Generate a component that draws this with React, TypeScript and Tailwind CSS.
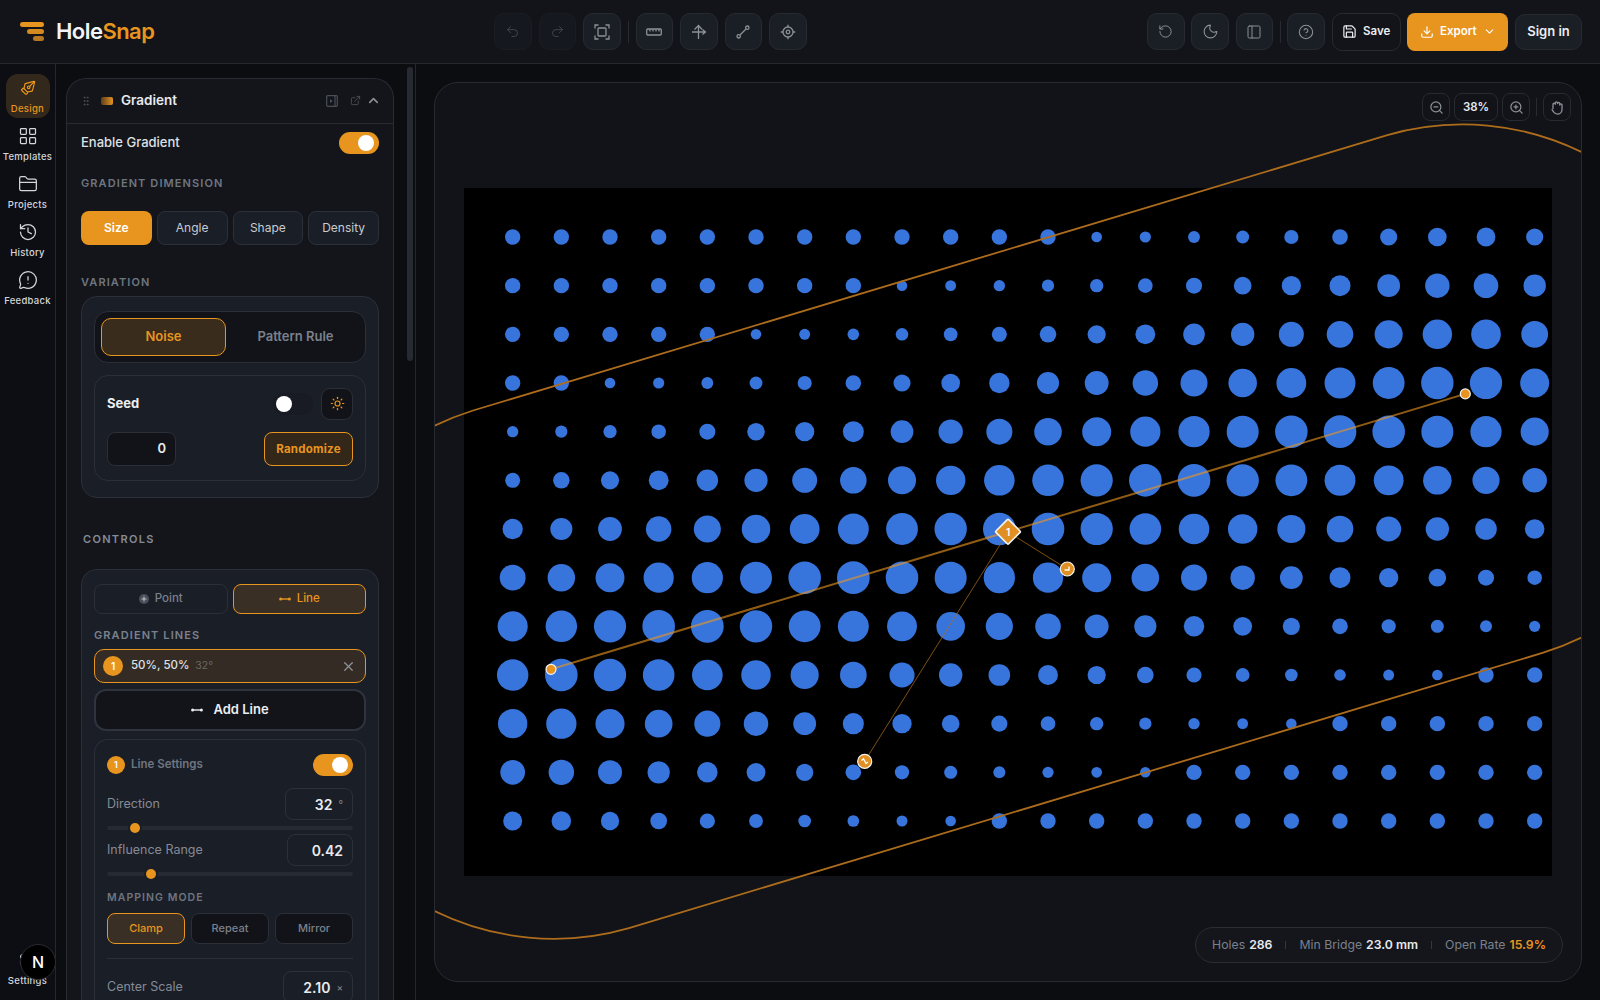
import {
  ChevronDown,
  ChevronUp,
  CircleHelp,
  Download,
  ExternalLink,
  FolderClosed,
  GripVertical,
  History,
  LayoutGrid,
  MessageCircleWarning,
  Moon,
  PanelLeft,
  PenTool,
  Redo2,
  RotateCcw,
  Save,
  Settings,
  Sun,
  Undo2,
  X,
  ZoomIn,
  ZoomOut,
} from 'lucide-react'
import type { ReactNode } from 'react'

const railItems = [
  { label: 'Templates', icon: LayoutGrid },
  { label: 'Projects', icon: FolderClosed },
  { label: 'History', icon: History },
  { label: 'Feedback', icon: MessageCircleWarning },
]

const toolBtn =
  'flex items-center justify-center w-[37.5px] h-[37.5px] rounded-[10px] bg-[#1a1e25] border border-[#262a31] text-[#8b9099]'
const zoomBtn =
  'flex items-center justify-center w-[28px] h-[28px] rounded-[8px] border border-[#262a31] text-[#8b9099]'

// band geometry, in page pixels
const A = { x: 551, y: 669.3 }
const B = { x: 1465.3, y: 393.9 }
const BAND = 270.3

function holeDiameter(x: number, y: number) {
  const dx = B.x - A.x
  const dy = B.y - A.y
  const t = Math.max(0, Math.min(1, ((x - A.x) * dx + (y - A.y) * dy) / (dx * dx + dy * dy)))
  const dist = Math.hypot(x - (A.x + dx * t), y - (A.y + dy * t))
  if (dist > BAND) return 15.4
  const s = 1 - dist / BAND
  return 10.5 + 22.2 * s * s * (3 - 2 * s)
}

function Holes() {
  const dots = []
  for (let r = 0; r < 13; r++) {
    for (let c = 0; c < 22; c++) {
      const x = 512.67 + c * 48.667
      const y = 237 + r * 48.667
      dots.push(<circle key={`${r}-${c}`} cx={x - 464} cy={y - 188} r={holeDiameter(x, y) / 2} fill="#3775dd" />)
    }
  }
  return (
    <svg viewBox="0 0 1088 688" width="1088" height="688" className="block">
      {dots}
    </svg>
  )
}

function Overlay() {
  return (
    <svg viewBox="435 83 1146 898" className="absolute inset-0 w-full h-full pointer-events-none">
      <path
        d="M473.05 410.5 L1387.35 135.1 A270.3 270.3 0 0 1 1543.25 652.7 L628.95 928.1 A270.3 270.3 0 0 1 473.05 410.5 Z"
        fill="none"
        stroke="#ac6c1c"
        strokeWidth="1.8"
      />
      <line x1={A.x} y1={A.y} x2={B.x} y2={B.y} stroke="#e8951f" strokeOpacity="0.62" strokeWidth="2" />
      <line x1="1008" y1="532" x2="864.7" y2="761.3" stroke="#a8691c" strokeOpacity="0.75" strokeWidth="1" />
      <line x1="1008" y1="532" x2="1067.3" y2="569" stroke="#a8691c" strokeOpacity="0.75" strokeWidth="1" />
      <circle cx={A.x} cy={A.y} r="5" fill="#e8951f" stroke="#f4f4f5" strokeWidth="1.2" />
      <circle cx={B.x} cy={B.y} r="5" fill="#e8951f" stroke="#f4f4f5" strokeWidth="1.2" />
      <rect x="999" y="522.7" width="18" height="18" fill="#e08f22" stroke="#f4f4f5" strokeWidth="1.6" transform="rotate(45 1008 531.7)" rx="1" />
      <text x="1008" y="535.7" textAnchor="middle" fontSize="10" fontWeight="600" fill="#fff">
        1
      </text>
      <circle cx="1067.3" cy="569" r="7" fill="#e08f22" stroke="#f4f4f5" strokeWidth="1.2" />
      <path d="M1064.5 570 H1069 V566.5" fill="none" stroke="#fff" strokeWidth="1.3" />
      <circle cx="864.7" cy="761.3" r="7" fill="#e08f22" stroke="#f4f4f5" strokeWidth="1.2" />
      <path d="M861.5 760.5 L863.5 758.8 L866 763.5 L868 762" fill="none" stroke="#fff" strokeWidth="1.3" />
    </svg>
  )
}

function Toggle() {
  return (
    <div className="flex items-center justify-end w-10 h-[22px] rounded-full bg-[#e8951f] pr-[5px]">
      <div className="w-4 h-4 rounded-full bg-white" />
    </div>
  )
}

function Badge({ size }: { size: string }) {
  return <div className={`flex items-center justify-center rounded-full bg-[#e8951f] text-white font-semibold ${size}`}>1</div>
}

function Slider({ thumb }: { thumb: string }) {
  return (
    <div className="relative h-[4px] mx-[12px] rounded-full bg-[#262a33]">
      <div className={`absolute top-[-3px] w-[10px] h-[10px] rounded-full bg-[#e8951f] shadow-[0_0_0_2px_#1a1e27] ${thumb}`} />
    </div>
  )
}

function NumField({ label, value, unit, width }: { label: string; value: string; unit?: string; width: string }) {
  return (
    <div className="flex items-center justify-between px-[12px]">
      <span className="pt-[1px] text-[12.5px] text-[#858b96]">{label}</span>
      <div className={`flex items-center justify-end gap-[6px] h-[32px] pt-[1px] pr-[9px] rounded-[8px] border border-[#2c3039] ${width}`}>
        <span className="text-[14px] font-semibold text-[#e8eaee]">{value}</span>
        {unit && <span className="text-[10px] text-[#858b96]">{unit}</span>}
      </div>
    </div>
  )
}

function Heading({ children, className }: { children: ReactNode; className: string }) {
  return <p className={`text-[11px] font-semibold tracking-[0.1em] text-[#6f7580] ${className}`}>{children}</p>
}

function LineGlyph({ color }: { color: string }) {
  return (
    <svg width="12" height="8" viewBox="0 0 12 8" fill="none">
      <line x1="1.5" y1="4" x2="10.5" y2="4" stroke={color} strokeWidth="1.4" />
      <circle cx="1.6" cy="4" r="1.5" fill={color} />
      <circle cx="10.4" cy="4" r="1.5" fill={color} />
    </svg>
  )
}

function Sidebar() {
  return (
    <aside className="relative flex flex-col items-center w-[56px] shrink-0 border-r border-[#24272e] bg-[#0d0e13] pt-[10px] pb-[10px]">
      <div className="flex flex-col items-center gap-[5.5px] w-[44px] h-[44px] pt-[4px] rounded-[12px] bg-[#33281c] text-[#e8951f]">
        <div className="flex items-center justify-center h-5">
          <PenTool size={16} strokeWidth={1.75} className="rotate-90" />
        </div>
        <span className="text-[9.5px] leading-[10px] font-medium tracking-[0.03em]">Design</span>
      </div>
      {railItems.map(item => (
        <div key={item.label} className="flex flex-col items-center gap-[5.5px] w-[44px] h-[44px] mt-[4px] pt-[4px] text-[#d3d6db]">
          <item.icon size={20} strokeWidth={1.5} />
          <span className="text-[9.5px] leading-[10px] font-medium tracking-[0.03em]">{item.label}</span>
        </div>
      ))}
      <div className="flex flex-col items-center gap-[5.5px] w-[44px] h-[44px] mt-auto pt-[4px] text-[#d3d6db]">
        <Settings size={20} strokeWidth={1.5} />
        <span className="text-[9.5px] leading-[10px] font-medium tracking-[0.03em]">Settings</span>
      </div>
      <div className="absolute left-[20px] bottom-[20px] flex items-center justify-center w-9 h-9 rounded-full bg-black border border-[#2c2c30] text-white text-[16px] font-medium">
        N
      </div>
    </aside>
  )
}

function GradientPanel() {
  return (
    <div className="w-[328px] ml-[10px] mt-[14px] shrink-0 rounded-t-[20px] border border-b-0 border-[#282b33] bg-[#13151b]">
      <div className="flex items-center h-[45px] pb-[1px] pl-[13px] pr-[12px] border-b border-[#282b33]">
        <GripVertical size={12} className="text-[#4a4e57]" />
        <div className="w-3 h-2 ml-[9px] rounded-[2px] bg-gradient-to-r from-[#5e3f18] to-[#e8951f]" />
        <span className="ml-[8px] text-[13.5px] font-semibold text-[#e8eaee]">Gradient</span>
        <svg width="12" height="12" viewBox="0 0 12 12" fill="none" className="ml-auto text-[#4a4e57]">
          <rect x="0.7" y="0.7" width="10.6" height="10.6" rx="1" stroke="currentColor" strokeWidth="1.2" />
          <path d="M4 4 L6.8 6 L4 8 Z" fill="currentColor" />
          <line x1="9" y1="1" x2="9" y2="11" stroke="currentColor" strokeWidth="1.2" />
        </svg>
        <ExternalLink size={11} className="ml-[12px] text-[#4a4e57]" />
        <ChevronUp size={15} strokeWidth={2.5} className="ml-[5px] text-[#8b9099]" />
      </div>

      <div className="px-[14px]">
        <div className="flex items-center justify-between h-[38px]">
          <span className="text-[13px] font-medium text-[#dfe1e5]">Enable Gradient</span>
          <Toggle />
        </div>
        <Heading className="mt-[13px]">GRADIENT DIMENSION</Heading>
        <div className="grid grid-cols-4 gap-[5px] mt-[19px]">
          <div className="flex items-center justify-center h-[34px] rounded-[8px] bg-[#e8951f] text-[12px] font-semibold text-white">Size</div>
          {['Angle', 'Shape', 'Density'].map(label => (
            <div key={label} className="flex items-center justify-center h-[34px] rounded-[8px] border border-[#2b303a] bg-[#1a1e26] text-[12px] text-[#c8cbd1]">
              {label}
            </div>
          ))}
        </div>
        <Heading className="mt-[29px]">VARIATION</Heading>

        <div className="mt-[5.5px] px-[12px] pt-[14px] h-[202px] rounded-[16px] border border-[#2b2f38] bg-[#1a1e27]">
          <div className="flex items-center gap-[6px] h-[52px] px-[6px] rounded-[14px] border border-[#2b2f38] bg-[#111318]">
            <div className="flex w-[125px] items-center justify-center h-[38px] rounded-[10px] border border-[#e8951f] bg-[#3a2c1c] text-[13px] font-semibold text-[#e8951f]">Noise</div>
            <div className="flex flex-1 items-center justify-center h-[38px] text-[13px] font-semibold text-[#7b818c]">Pattern Rule</div>
          </div>
          <div className="mt-[12px] h-[106px] px-[12px] rounded-[14px] border border-[#2b2f38]">
            <div className="flex items-center h-[32px] mt-[12px]">
              <span className="pt-[1px] text-[13px] font-bold text-[#eceef1]">Seed</span>
              <div className="flex items-center w-10 h-[22px] ml-auto pl-[3px] rounded-full bg-[#181b23]">
                <div className="w-4 h-4 rounded-full bg-white" />
              </div>
              <div className="flex items-center justify-center w-8 h-8 ml-[8px] rounded-[9px] border border-[#2b2f38] bg-[#111318] text-[#e8951f]">
                <Sun size={15} strokeWidth={1.9} />
              </div>
            </div>
            <div className="flex items-center justify-between mt-[12px]">
              <div className="flex items-center justify-end w-[69px] h-[34px] pt-[1px] pr-[9px] rounded-[8px] border border-[#2b2f38] bg-[#111318] text-[13px] font-semibold text-[#e8eaee]">0</div>
              <div className="flex items-center justify-center w-[89px] h-[34px] pt-[2px] rounded-[8px] border border-[#e8951f] bg-[#33271a] text-[11.5px] font-bold tracking-[0.02em] text-[#e8951f]">Randomize</div>
            </div>
          </div>
        </div>

        <p className="mt-[33px] ml-[2px] text-[11px] font-semibold tracking-[0.12em] text-[#858b96]">CONTROLS</p>

        <div className="mt-[22px] pt-[14px] rounded-t-[16px] border border-b-0 border-[#2b2f38] bg-[#1a1e27]">
          <div className="grid grid-cols-2 gap-[5px] px-[12px]">
            <div className="flex items-center justify-center gap-[6px] h-[30px] rounded-[8px] border border-[#2b2f38] text-[11.5px] font-medium text-[#7b818c]">
              <svg width="10" height="10" viewBox="0 0 10 10">
                <circle cx="5" cy="5" r="5" fill="#4a4e5a" />
                <path d="M5 1.5 L5.8 4.2 L8.5 5 L5.8 5.8 L5 8.5 L4.2 5.8 L1.5 5 L4.2 4.2 Z" fill="#aeb2ba" />
              </svg>
              Point
            </div>
            <div className="flex items-center justify-center gap-[6px] h-[30px] rounded-[8px] border border-[#e8951f] bg-[#3a2f25] text-[11.5px] font-medium text-[#e8951f]">
              <LineGlyph color="#e8951f" />
              Line
            </div>
          </div>

          <div className="px-[12px]">
            <p className="mt-[12.5px] text-[11px] font-semibold tracking-[0.1em] text-[#7b818c]">GRADIENT LINES</p>
            <div className="flex items-center h-[34px] mt-[6px] px-[8px] rounded-[10px] border border-[#e8951f] bg-[#342c24]">
              <Badge size="w-5 h-5 text-[10px]" />
              <span className="ml-[8px] text-[11.5px] font-medium text-[#dfe1e5]">50%, 50%</span>
              <span className="ml-[6px] text-[10.5px] text-[#6b6660]">32°</span>
              <X size={15} className="ml-auto mr-[1px] text-[#8b9099]" />
            </div>
            <div className="flex items-center justify-center gap-[10px] h-[41.5px] mt-[6px] rounded-[12px] border-2 border-[#2e333d] bg-[#12141a] text-[13px] font-semibold text-[#eceef1]">
              <LineGlyph color="#eceef1" />
              Add Line
            </div>

            <div className="mt-[8px] pb-[40px] rounded-t-[14px] border border-b-0 border-[#2b2f38]">
              <div className="flex items-center h-[22px] mt-[14px] px-[12px]">
                <Badge size="w-[18px] h-[18px] text-[9px]" />
                <span className="ml-[6px] pt-[1px] text-[11.5px] font-semibold text-[#6f7580]">Line Settings</span>
                <div className="ml-auto">
                  <Toggle />
                </div>
              </div>
              <div className="mt-[12px]">
                <NumField label="Direction" value="32" unit="°" width="w-[68px]" />
              </div>
              <div className="mt-[6px]">
                <Slider thumb="left-[23px]" />
              </div>
              <div className="mt-[4px]">
                <NumField label="Influence Range" value="0.42" width="w-[66px]" />
              </div>
              <div className="mt-[6px]">
                <Slider thumb="left-[39px]" />
              </div>
              <p className="mt-[14.8px] px-[12px] text-[10.5px] font-semibold tracking-[0.1em] text-[#6f7580]">MAPPING MODE</p>
              <div className="grid grid-cols-3 gap-[6px] mt-[6.7px] px-[12px]">
                <div className="flex items-center justify-center h-[31px] rounded-[8px] border border-[#e8951f] bg-[#3a2f25] text-[11px] font-medium text-[#e8951f]">Clamp</div>
                <div className="flex items-center justify-center h-[31px] rounded-[8px] border border-[#2b2f38] bg-[#111318] text-[11px] font-medium text-[#7b818c]">Repeat</div>
                <div className="flex items-center justify-center h-[31px] rounded-[8px] border border-[#2b2f38] bg-[#111318] text-[11px] font-medium text-[#7b818c]">Mirror</div>
              </div>
              <div className="h-px mx-[12px] mt-[14px] bg-[#2b2f38]" />
              <div className="mt-[12px]">
                <NumField label="Center Scale" value="2.10" unit="×" width="w-[70px]" />
              </div>
            </div>
          </div>
        </div>
      </div>
    </div>
  )
}

export default function App() {
  return (
    <div className="flex flex-col h-screen overflow-hidden bg-[#0c0d11] font-['Inter',sans-serif]">
      <header className="flex items-center h-[64px] shrink-0 border-b border-[#24272e] bg-[#12141a] pr-[18px]">
        <div className="flex items-center w-[494px] shrink-0 pl-[20px]">
          <svg width="24" height="20" viewBox="0 0 24 20">
            <rect x="0" y="0" width="24" height="5" rx="2.5" fill="#e8951f" />
            <rect x="7" y="7" width="17" height="5" rx="2.5" fill="#d58a20" />
            <rect x="13" y="14" width="11" height="5" rx="2.5" fill="#b67821" />
          </svg>
          <span className="ml-[12px] text-[22px] font-semibold tracking-[-0.025em] text-[#f3f4f6]">
            Hole<span className="text-[#e8951f]">Snap</span>
          </span>
        </div>

        <div className="flex items-center gap-[7px]">
          <div className={`${toolBtn} opacity-40`}>
            <Undo2 size={15} strokeWidth={1.5} />
          </div>
          <div className={`${toolBtn} opacity-40`}>
            <Redo2 size={15} strokeWidth={1.5} />
          </div>
          <div className={toolBtn}>
            <svg width="16" height="16" viewBox="0 0 16 16" fill="none" stroke="currentColor" strokeWidth="1.3">
              <path d="M1 4.5 V1 H4.5 M11.5 1 H15 V4.5 M15 11.5 V15 H11.5 M4.5 15 H1 V11.5" />
              <rect x="4" y="4" width="8" height="8" rx="1" />
            </svg>
          </div>
          <div className="w-px h-[22px] bg-[#262a31]" />
          <div className={toolBtn}>
            <svg width="16" height="8" viewBox="0 0 16 8" fill="none" stroke="currentColor" strokeWidth="1.3">
              <rect x="0.7" y="1" width="14.6" height="6" rx="1" />
              <path d="M4 1 V3.5 M7 1 V3.5 M10 1 V3.5 M13 1 V3.5" />
            </svg>
          </div>
          <div className={toolBtn}>
            <svg width="16" height="16" viewBox="0 0 16 16" fill="none" stroke="currentColor" strokeWidth="1.3">
              <path d="M7.5 15 V2 M3.5 5.5 L7.5 1.5 L11 5.5 M1 8 H14 M11.5 5.5 L14.5 8 L11.5 10.5" />
            </svg>
          </div>
          <div className={toolBtn}>
            <svg width="14" height="14" viewBox="0 0 14 14" fill="none" stroke="currentColor" strokeWidth="1.3">
              <circle cx="11.3" cy="2.7" r="1.7" />
              <circle cx="2.7" cy="11.3" r="1.7" />
              <path d="M4 10 L10 4" />
            </svg>
          </div>
          <div className={toolBtn}>
            <svg width="16" height="16" viewBox="0 0 16 16" fill="none" stroke="currentColor" strokeWidth="1.3">
              <circle cx="8" cy="8" r="5" />
              <circle cx="8" cy="8" r="1.8" />
              <path d="M8 0.8 V3 M8 13 V15.2 M0.8 8 H3 M13 8 H15.2" />
            </svg>
          </div>
        </div>

        <div className="flex items-center gap-[6.7px] ml-auto">
          <div className={toolBtn}>
            <RotateCcw size={15} strokeWidth={1.6} />
          </div>
          <div className={toolBtn}>
            <Moon size={17} strokeWidth={1.5} />
          </div>
          <div className={toolBtn}>
            <PanelLeft size={16} strokeWidth={1.5} />
          </div>
          <div className="w-px h-[22px] bg-[#262a31]" />
          <div className={toolBtn}>
            <CircleHelp size={16} strokeWidth={1.6} />
          </div>
          <div className="flex items-center justify-center gap-[6px] w-[69px] h-[38px] rounded-[10px] border border-[#262a31] text-[11.5px] font-semibold text-[#eceef1]">
            <Save size={15} strokeWidth={1.9} />
            Save
          </div>
          <div className="flex items-center justify-center gap-[6px] w-[101px] h-[38px] rounded-[8px] bg-[#e8951f] text-[11.5px] font-semibold text-white">
            <Download size={14} strokeWidth={2} />
            Export
            <ChevronDown size={13} strokeWidth={2} />
          </div>
          <div className="flex items-center justify-center w-[67px] h-[36px] rounded-[10px] border border-[#262a31] bg-[#1a1e25] text-[13px] font-semibold text-[#eceef1]">
            Sign in
          </div>
        </div>
      </header>

      <div className="flex flex-1 min-h-0">
        <Sidebar />

        <div className="flex w-[360px] shrink-0 overflow-hidden border-r border-[#24272e]">
          <GradientPanel />
          <div className="w-[6px] h-[294px] mt-[3px] ml-[13px] rounded-full bg-[#262a32]" />
        </div>

        <main className="flex flex-1 min-w-0 p-[18px]">
          <div className="relative flex-1 overflow-hidden rounded-[24px] border border-[#272a32] bg-[#111318]">
            <div className="w-[1088px] h-[688px] ml-[29px] mt-[105px] bg-black">
              <Holes />
            </div>
            <Overlay />

            <div className="absolute top-[10px] right-[10px] flex items-center gap-[4px]">
              <div className={zoomBtn}>
                <ZoomOut size={15} strokeWidth={2} />
              </div>
              <div className="flex items-center justify-center w-[44px] h-[28px] pt-[2px] rounded-[8px] border border-[#262a31] text-[11.5px] font-semibold text-[#e8eaee]">38%</div>
              <div className={zoomBtn}>
                <ZoomIn size={15} strokeWidth={2} />
              </div>
              <div className="w-px h-[18px] mx-[2px] bg-[#262a31]" />
              <div className={zoomBtn}>
                <svg width="15" height="15" viewBox="0 0 16 16" fill="none" stroke="currentColor" strokeWidth="1.4" strokeLinecap="round" strokeLinejoin="round">
                  <path d="M3.2 9 V4.6 a1.2 1.2 0 0 1 2.4 0 V3.2 a1.2 1.2 0 0 1 2.4 0 V3.8 a1.2 1.2 0 0 1 2.4 0 V5.4 a1.2 1.2 0 0 1 2.4 0 V10 a5 5 0 0 1 -5 5 H8 a5 5 0 0 1 -4 -2 L2.2 10.2" />
                </svg>
              </div>
            </div>

            <div className="absolute right-[18px] bottom-[18px] flex items-center h-[36px] px-[16px] rounded-full border border-[#2a2d36] bg-[#14161c] text-[12.25px] text-[#7b818c]">
              <span>Holes</span>
              <span className="ml-[4px] font-semibold text-[#e8eaee]">286</span>
              <div className="w-px h-[8px] mx-[13px] bg-[#33363e]" />
              <span>Min Bridge</span>
              <span className="ml-[4px] font-semibold text-[#e8eaee]">23.0 mm</span>
              <div className="w-px h-[8px] mx-[13px] bg-[#33363e]" />
              <span>Open Rate</span>
              <span className="ml-[4px] font-semibold text-[#e8951f]">15.9%</span>
            </div>
          </div>
        </main>
      </div>
    </div>
  )
}
